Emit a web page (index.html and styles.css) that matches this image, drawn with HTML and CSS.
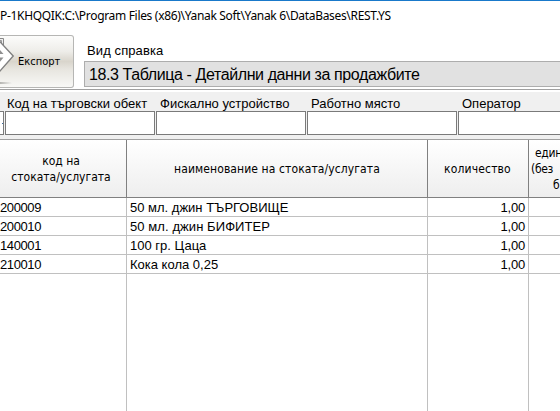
FILE: index.html
```html
<!DOCTYPE html>
<html lang="bg">
<head>
<meta charset="utf-8">
<title>Справка</title>
<link rel="stylesheet" href="styles.css">
</head>
<body>
<header class="titlebar"><span class="title">P-1KHQQIK:C:\Program Files (x86)\Yanak Soft\Yanak 6\DataBases\REST.YS</span></header>
<section class="toolbar">
  <button class="export">
    <svg class="export-icon" width="16" height="51" viewBox="0 0 16 51">
      <defs><linearGradient id="shade"><stop offset="0" stop-color="#b4b4b0"/><stop offset="1" stop-color="#b4b4b0" stop-opacity="0"/></linearGradient></defs>
      <rect x="0" y="46" width="12" height="2" fill="url(#shade)"/>
      <path d="M-2 2.500H3.500V30H-2Z" fill="#eee" stroke="#888"/>
      <path d="M-2 4.500H1.500V20" fill="none" stroke="#999"/>
      <path d="M-4 1.500L13.200 20L-4 39.500Z" fill="#fff" stroke="#808080" stroke-width="1.400"/>
      <path d="M-1 13L3.500 18H-1ZM-1 21.500H3.500L-1 27Z" fill="#909090"/>
    </svg>
    <span class="export-label">Експорт</span>
  </button>
  <div class="report">
    <label class="report-label"><span>Вид справка</span></label>
    <div class="combo"><span>18.3 Таблица - Детайлни данни за продажбите</span></div>
  </div>
</section>
<section class="filters">
  <div class="filter first"><div class="box"><i class="mark"></i></div></div>
  <div class="filter second"><label>Код на търговски обект</label><div class="box"></div></div>
  <div class="filter"><label>Фискално устройство</label><div class="box"></div></div>
  <div class="filter"><label>Работно място</label><div class="box"></div></div>
  <div class="filter last"><label>Оператор</label><div class="box"></div></div>
</section>
<main class="grid">
  <div class="row head">
    <div class="cell code-head"><span>код на<br>стоката/услугата</span></div>
    <div class="cell name-head"><span>наименование на стоката/услугата</span></div>
    <div class="cell qty-head"><span>количество</span></div>
    <div class="cell price-head"><span class="line1">един</span><span class="line2">(без</span><span class="line3">б</span></div>
  </div>
  <div class="row"><div class="cell">200009</div><div class="cell">50 мл. джин ТЪРГОВИЩЕ</div><div class="cell num">1,00</div><div class="cell"></div></div>
  <div class="row"><div class="cell">200010</div><div class="cell wide">50 мл. джин БИФИТЕР</div><div class="cell num">1,00</div><div class="cell"></div></div>
  <div class="row"><div class="cell">140001</div><div class="cell">100 гр. Цаца</div><div class="cell num">1,00</div><div class="cell"></div></div>
  <div class="row"><div class="cell">210010</div><div class="cell">Кока кола 0,25</div><div class="cell num">1,00</div><div class="cell"></div></div>
  <div class="row rest"><div class="cell"></div><div class="cell"></div><div class="cell"></div><div class="cell"></div></div>
</main>
</body>
</html>
```

FILE: styles.css
```css
* { box-sizing: border-box; }
body {
  margin: 0;
  width: 560px;
  height: 411px;
  overflow: hidden;
  display: flex;
  flex-direction: column;
  background: #fff;
  color: #000;
  font: 13px/16px "Liberation Sans", Arial, sans-serif;
  white-space: nowrap;
}
.titlebar { height: 35px; border-top: 1px solid #1979ca; padding-top: 7px; font: 12px/16px "Noto Sans", sans-serif; }
.title { letter-spacing: -0.32px; }
.toolbar { height: 55px; display: flex; border-bottom: 1px solid #a0a0a0; }
.export {
  width: 74px; height: 53px; padding: 0; display: flex; align-items: center;
  border: 1px solid #b6b6b4; border-left: 0; border-radius: 0 3px 3px 0;
  background: linear-gradient(#fcfcfb, #eeede9 30%, #d9d5cc 50%, #e7e5df 65%, #f8f8f6 100%);
  color: #000; font: 12px/16px "DejaVu Sans Condensed", "DejaVu Sans", sans-serif; font-stretch: condensed;
}
.export-icon { flex: none; }
.export-label { margin-left: 2px; font-size: 11px; letter-spacing: 0; }
.report { flex: 1; margin-left: 10px; padding-top: 8px; }
.report-label { display: block; height: 18px; padding-left: 3px; }
.report-label span { letter-spacing: 0.1px; }
.combo { height: 26px; border: 1px solid #adadad; border-right: 0; background: #e1e1e1; padding-left: 4px; font-size: 16px; line-height: 25px; letter-spacing: -0.4px; }
.filters { height: 49px; display: flex; gap: 1px; border-top: 2px solid #fff; background: #f0f0f0; }
.filter { width: 150px; flex: none; display: flex; flex-direction: column; justify-content: flex-end; height: 43px; }
.filter.first { width: 4px; }
.filter.last { width: 102px; }
.last .box { border-right: 0; }
.filter label { height: 15px; padding-left: 4px; line-height: 15px; }
.filter.second label { padding-left: 2px; }
.box { height: 24px; background: #fff; border: 1px solid #7a7a7a; }
.first .box { border-left: 0; display: flex; align-items: center; justify-content: flex-end; }
.mark { width: 1px; height: 1px; background: #3b6ea5; }
.grid { flex: 1; display: flex; flex-direction: column; border-top: 1px solid #a0a0a0; }
.row { display: grid; grid-template-columns: 127px 301px 101px 31px; height: 19px; flex: none; }
.cell { border-right: 1px solid #c0c0c0; border-bottom: 1px solid #c0c0c0; line-height: 20px; padding-left: 3px; overflow: hidden; }
.cell:first-child { padding-left: 0; letter-spacing: -0.4px; }
.cell:last-child { border-right: 0; }
.cell.wide { letter-spacing: 0.08px; }
.cell.num { text-align: right; padding-right: 3px; letter-spacing: -0.2px; }
.head { height: 58px; font: 12px/16px "DejaVu Sans Condensed", "DejaVu Sans", sans-serif; font-stretch: condensed; }
.head .cell { display: flex; align-items: center; justify-content: center; text-align: center; line-height: 16px; padding: 0; border-color: #808080; background: linear-gradient(#fff, #eee); letter-spacing: 0; }
.head .code-head { padding-right: 4px; }
.head .name-head { letter-spacing: 0.1px; }
.head .qty-head { letter-spacing: 0.15px; padding-right: 1px; }
.head .price-head { flex-direction: column; align-items: flex-start; letter-spacing: -0.3px; }
.line1 { padding-left: 6px; }
.line2 { padding-left: 2px; }
.line3 { padding-left: 24px; }
.rest { flex: 1; }
.rest .cell { border-bottom: 0; }
```
